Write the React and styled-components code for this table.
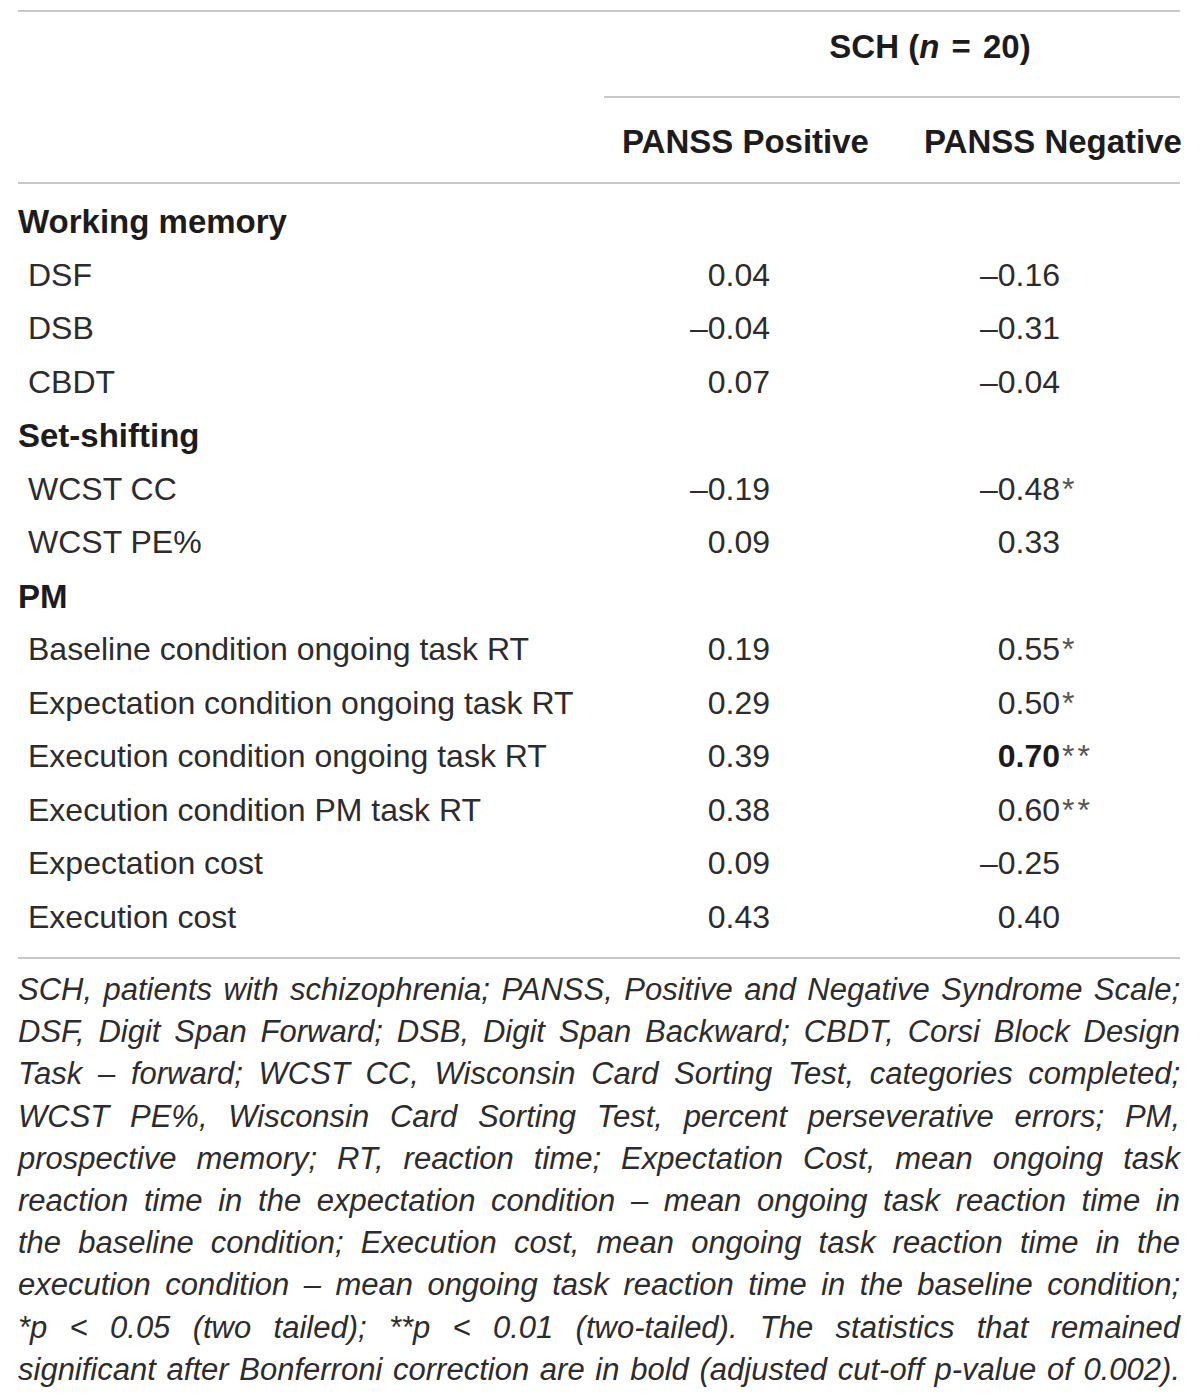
import React from 'react';
import styled, { createGlobalStyle } from 'styled-components';

const Global = createGlobalStyle`
  html, body { margin: 0; padding: 0; background: #ffffff; }
  body {
    font-family: "Liberation Sans", Arial, sans-serif;
    color: #262324;
  }
`;

const RULE = '2px solid #c8c8c8';
const COLS = '586px 304px 272px';

const Page = styled.div`
  width: 1200px;
  box-sizing: border-box;
  padding: 10px 20px 0 18px;
`;

const Table = styled.div`
  display: flex;
  flex-direction: column;
  border-top: ${RULE};
`;

const SpanRow = styled.div`
  display: grid;
  grid-template-columns: 586px 1fr;
  height: 86px;
`;

const SpanCell = styled.div`
  grid-column: 2;
  border-bottom: ${RULE};
  box-sizing: border-box;
  padding: 0 0 14px 76px;
  display: flex;
  align-items: center;
  justify-content: center;
  font-size: 33px;
  font-weight: 700;
  color: #1e1b1c;
  white-space: pre;
`;

const Eq = styled.span`
  padding: 0 3px;
`;

const HeadRow = styled.div`
  display: grid;
  grid-template-columns: ${COLS};
  height: 86px;
  box-sizing: border-box;
  border-bottom: ${RULE};
`;

const HeadCell = styled.div`
  display: flex;
  align-items: center;
  padding: 4px 0 0 ${(p) => p.$pad}px;
  font-size: 33px;
  font-weight: 700;
  color: #1e1b1c;
  white-space: nowrap;
`;

const Body = styled.div`
  padding: 11px 0 13px;
  border-bottom: ${RULE};
`;

const Row = styled.div`
  display: grid;
  grid-template-columns: ${COLS};
  height: 53.5px;
  line-height: 53.5px;
  font-size: 32px;
  white-space: nowrap;
`;

const Label = styled.div`
  padding-left: ${(p) => (p.$section ? 0 : 10)}px;
  font-weight: ${(p) => (p.$section ? 700 : 400)};
  font-size: ${(p) => (p.$section ? 33 : 32)}px;
  color: ${(p) => (p.$section ? '#1e1b1c' : '#2e2b2c')};
`;

const Value = styled.div`
  display: flex;
  color: #2e2b2c;
`;

const Num = styled.span`
  width: ${(p) => p.$edge}px;
  text-align: right;
  font-weight: ${(p) => (p.$bold ? 700 : 400)};
  color: ${(p) => (p.$bold ? '#1e1b1c' : 'inherit')};
`;

const Stars = styled.span`
  color: #555;
  padding-left: 2px;
  letter-spacing: 3px;
`;

const Foot = styled.div`
  padding-top: 10px;
  font-size: 31px;
  font-style: italic;
  line-height: 42.2px;
  color: #2e2b2c;
`;

const FootLine = styled.div`
  text-align: justify;
  text-align-last: justify;
  white-space: nowrap;
`;

const rows = [
  { section: 'Working memory' },
  { label: 'DSF', a: '0.04', b: '–0.16' },
  { label: 'DSB', a: '–0.04', b: '–0.31' },
  { label: 'CBDT', a: '0.07', b: '–0.04' },
  { section: 'Set-shifting' },
  { label: 'WCST CC', a: '–0.19', b: '–0.48', bs: '*' },
  { label: 'WCST PE%', a: '0.09', b: '0.33' },
  { section: 'PM' },
  { label: 'Baseline condition ongoing task RT', a: '0.19', b: '0.55', bs: '*' },
  { label: 'Expectation condition ongoing task RT', a: '0.29', b: '0.50', bs: '*' },
  { label: 'Execution condition ongoing task RT', a: '0.39', b: '0.70', bs: '**', bold: true },
  { label: 'Execution condition PM task RT', a: '0.38', b: '0.60', bs: '**' },
  { label: 'Expectation cost', a: '0.09', b: '–0.25' },
  { label: 'Execution cost', a: '0.43', b: '0.40' },
];

const foot = [
  'SCH, patients with schizophrenia; PANSS, Positive and Negative Syndrome Scale;',
  'DSF, Digit Span Forward; DSB, Digit Span Backward; CBDT, Corsi Block Design',
  'Task – forward; WCST CC, Wisconsin Card Sorting Test, categories completed;',
  'WCST PE%, Wisconsin Card Sorting Test, percent perseverative errors; PM,',
  'prospective memory; RT, reaction time; Expectation Cost, mean ongoing task',
  'reaction time in the expectation condition – mean ongoing task reaction time in',
  'the baseline condition; Execution cost, mean ongoing task reaction time in the',
  'execution condition – mean ongoing task reaction time in the baseline condition;',
  '*p < 0.05 (two tailed); **p < 0.01 (two-tailed). The statistics that remained',
  'significant after Bonferroni correction are in bold (adjusted cut-off p-value of 0.002).',
];

export default function App() {
  return (
    <Page>
      <Global />
      <Table>
        <SpanRow>
          <SpanCell>
            {'SCH ('}
            <i>n</i>
            <Eq>{' = '}</Eq>
            {'20)'}
          </SpanCell>
        </SpanRow>
        <HeadRow>
          <div />
          <HeadCell $pad={18}>PANSS Positive</HeadCell>
          <HeadCell $pad={16}>PANSS Negative</HeadCell>
        </HeadRow>
        <Body>
          {rows.map((r, i) =>
            r.section ? (
              <Row key={i}>
                <Label $section>{r.section}</Label>
              </Row>
            ) : (
              <Row key={i}>
                <Label>{r.label}</Label>
                <Value>
                  <Num $edge={166}>{r.a}</Num>
                </Value>
                <Value>
                  <Num $edge={152} $bold={r.bold}>{r.b}</Num>
                  {r.bs && <Stars>{r.bs}</Stars>}
                </Value>
              </Row>
            )
          )}
        </Body>
        <Foot>
          {foot.map((l, i) => (
            <FootLine key={i}>{l}</FootLine>
          ))}
        </Foot>
      </Table>
    </Page>
  );
}
